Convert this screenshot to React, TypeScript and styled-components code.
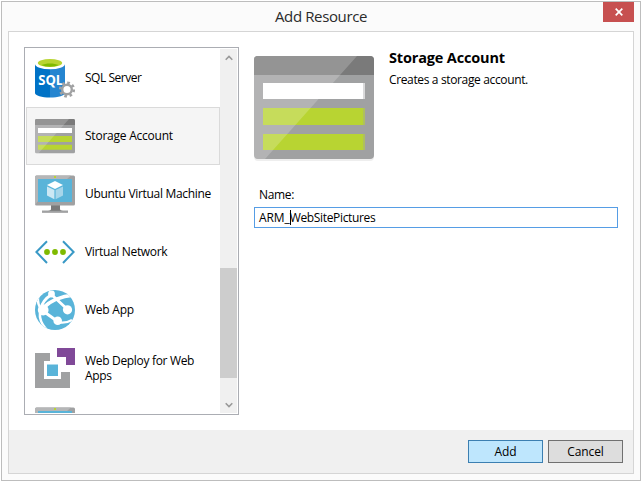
import React from 'react';
import styled, { createGlobalStyle } from 'styled-components';

const Global = createGlobalStyle`
  * { box-sizing: border-box; }
  body { margin: 0; background: #fff; color: #000; font: 12px/15px "Open Sans", "Noto Sans", sans-serif; }
`;

const Page = styled.div`
  width: 642px;
  height: 482px;
  padding: 1px;
`;
const Dialog = styled.main`
  width: 640px;
  height: 480px;
  display: flex;
  flex-direction: column;
  padding: 0 6px 6px;
  border: 1px solid #bdbdbd;
  background: #fbfbfb;
`;
const TitleBar = styled.header`
  height: 29px;
  flex: none;
  display: grid;
  grid-template-columns: 1fr 31px;
`;
const Title = styled.h1`
  margin: 0 0 0 31px;
  color: #2b2b2b;
  font-size: 15px;
  font-weight: 400;
  line-height: 29px;
  letter-spacing: -0.38px;
  text-align: center;
`;
const CloseButton = styled.button`
  display: grid;
  place-items: center;
  height: 20px;
  padding: 0;
  border: 0;
  background: #c75050;
`;
const Body = styled.div`
  flex: 1;
  min-height: 0;
  display: flex;
  flex-direction: column;
  border: 1px solid #d5d5d5;
  background: #fff;
`;
const Content = styled.div`
  height: 398px;
  display: flex;
  gap: 15px;
  padding: 15px 15px 15px;
`;
const ListBox = styled.div`
  width: 215px;
  height: 368px;
  flex: none;
  display: flex;
  padding: 1px;
  border: 1px solid #abadb3;
`;
const Items = styled.ul`
  width: 194px;
  height: 364px;
  margin: 0;
  padding: 0;
  overflow: hidden;
  list-style: none;
`;
const Item = styled.li<{ $selected?: boolean }>`
  height: 58px;
  display: flex;
  align-items: center;
  gap: 10px;
  padding-left: 8px;
  border: 1px solid ${p => (p.$selected ? '#dadada' : 'transparent')};
  background: ${p => (p.$selected ? '#f5f5f5' : 'transparent')};
  svg { flex: none; }
`;
const Label = styled.span<{ $track?: number }>`
  letter-spacing: ${p => p.$track ?? -0.1}px;
  white-space: pre;
`;
const ItemLabel = styled(Label)<{ $multiline?: boolean }>`
  padding-bottom: ${p => (p.$multiline ? 0 : 2)}px;
`;
const ScrollBar = styled.div`
  width: 17px;
  height: 364px;
  display: flex;
  flex-direction: column;
  background: #f0f0f0;
`;
const ScrollArrow = styled.div`
  height: 17px;
  display: grid;
  place-items: center;
`;
const Track = styled.div`
  flex: 1;
  padding-top: 202px;
`;
const Thumb = styled.div`
  height: 110px;
  background: #cdcdcd;
`;
const Details = styled.section`
  width: 364px;
  display: flex;
  flex-direction: column;
`;
const Summary = styled.div`
  display: flex;
  gap: 15px;
  height: 140px;
  padding-top: 9px;
`;
const Heading = styled.h2`
  margin: -8px 0 4px;
  font-size: 14.5px;
  font-weight: 700;
  line-height: 20px;
  letter-spacing: -0.16px;
`;
const FieldLabel = styled.label`
  display: block;
  height: 20px;
  padding-left: 5px;
`;
const Field = styled.div`
  display: flex;
  align-items: center;
  height: 21px;
  padding-left: 4px;
  border: 1px solid #569de5;
`;
const Caret = styled.i`
  width: 1px;
  height: 15px;
  margin: 0 -1px 0 0;
  background: #000;
`;
const Footer = styled.footer`
  flex: 1;
  display: flex;
  justify-content: flex-end;
  gap: 5px;
  padding: 10px 10px 0 0;
  background: #f0f0f0;
`;
const Button = styled.button<{ $primary?: boolean }>`
  width: 75px;
  height: 23px;
  padding: 0;
  border: 1px solid ${p => (p.$primary ? '#3c7fb1' : '#707070')};
  background: ${p => (p.$primary ? '#bee6fd' : '#dddddd')};
  color: #000;
  font: inherit;
`;

const SqlIcon = () => (
  <svg width="40" height="40" viewBox="0 0 40 40">
    <path d="M0 6v29c0 2.5 6.7 4.5 15 4.5V6z" fill="#0072c6" />
    <path d="M15 6v33.5c8.3 0 15-2 15-4.5V6z" fill="#2585d0" />
    <ellipse cx="15" cy="6" rx="15" ry="5.3" fill="#fff" />
    <ellipse cx="15" cy="5" rx="12.2" ry="4" fill="#b8d432" />
    <path d="M6.5 7.1c4-2.3 13-2.3 17 0-4.2 2.3-12.8 2.3-17 0z" fill="#7fba00" />
    <text x="3.2" y="26.8" fill="#fff" fontFamily="Open Sans, sans-serif" fontSize="14" fontWeight="700" textLength="25" lengthAdjust="spacingAndGlyphs">SQL</text>
    <circle cx="32" cy="31.5" r="6.8" fill="none" stroke="#a0a1a2" strokeWidth="2.6" strokeDasharray="2.67 2.67" />
    <circle cx="32" cy="31.5" r="4.8" fill="#fff" stroke="#a0a1a2" strokeWidth="2.4" />
  </svg>
);

const StorageIcon = () => (
  <svg width="40" height="40" viewBox="0 0 40 40">
    <rect y="3" width="40" height="34.3" rx="1.5" fill="#a0a1a2" />
    <path d="M0 9V4.5Q0 3 1.5 3h37Q40 3 40 4.5V9z" fill="#7a7a7a" />
    <path d="M3 12h34v5H3z" fill="#fff" />
    <path d="M3 20h34v6H3zM3 28.7h34v5H3z" fill="#b8d432" />
    <path d="M0 4.5Q0 3 1.5 3H34L3.5 37.3h-2Q0 37.3 0 35.8z" fill="#fff" opacity=".2" />
  </svg>
);

const LargeStorageIcon = () => (
  <svg width="120" height="105" viewBox="0 0 120 105">
    <rect y="1" width="120" height="104" rx="4" fill="#eee" />
    <rect width="120" height="103" rx="4" fill="#a0a1a2" />
    <path d="M0 19V4q0-4 4-4h112q4 0 4 4v15z" fill="#7a7a7a" />
    <path d="M9 27h102v16H9z" fill="#fff" />
    <path d="M9 52h102v17H9zM9 78h102v16H9z" fill="#b8d432" />
    <path d="M109 27h2v16h-2zM109 52h2v17h-2zM109 78h2v16h-2z" fill="#a0a1a2" opacity=".4" />
    <path d="M0 4q0-4 4-4h99L11 103H4q-4 0-4-4z" fill="#fff" opacity=".2" />
  </svg>
);

const MonitorIcon = () => (
  <svg width="40" height="40" viewBox="0 0 40 40">
    <path d="M16 31h9v4q0 1.7 3 1.7H33v1.8H7v-1.8h6q3 0 3-1.7z" fill="#7a7a7a" />
    <path d="M7 36.8h26v1.7H7z" fill="#a0a1a2" />
    <rect y="1.5" width="40" height="30" rx="1.5" fill="#a0a1a2" />
    <path d="M0 3q0-1.5 1.5-1.5H36L32 5H3v22L0 31z" fill="#b5b6b7" />
    <path d="M3 5h34v23H3z" fill="#59b4d9" />
    <path d="M19 2h2v2h-2z" fill="#b8d432" />
    <path d="m20 7 8 4-8 4-8-4z" fill="#fff" />
    <path d="m12 12.5 7.4 3.5v9.2L12 21.6z" fill="#cce8f4" />
    <path d="M28 12.5 20.6 16v9.2l7.4-3.6z" fill="#a7d6ea" />
  </svg>
);

const NetworkIcon = () => (
  <svg width="40" height="40" viewBox="0 0 40 40">
    <path d="M12 9.2 1.4 20 12 31M28 9.2 38.6 20 28 31" fill="none" stroke="#3999c6" strokeWidth="2" />
    <g fill="#7fba00"><circle cx="12" cy="20" r="2.9" /><circle cx="20" cy="20" r="2.9" /><circle cx="28" cy="20" r="2.9" /></g>
  </svg>
);

const WebIcon = () => (
  <svg width="40" height="40" viewBox="0 0 40 40">
    <defs><clipPath id="globe"><circle cx="20" cy="20" r="20" /></clipPath></defs>
    <g clipPath="url(#globe)">
      <path d="M0 0h40v40H0z" fill="#59b4d9" />
      <g fill="none" stroke="#fff">
        <path d="M17 5 32 19M16 5Q8 10 6 18" strokeWidth="2.8" />
        <path d="M8 18Q19 7 39 5" strokeWidth="3.6" />
        <path d="M8 21 22 31" strokeWidth="3" />
        <path d="M5 23Q4 31 11 39M3 6Q2 15 7 20" strokeWidth="2.6" />
        <path d="M22 32Q30 34 37 30" strokeWidth="2.4" />
      </g>
      <g fill="#fff"><circle cx="16.5" cy="4" r="3.4" /><circle cx="8.2" cy="20" r="5.4" /><circle cx="22.7" cy="30.7" r="4.3" /><circle cx="32.5" cy="19.8" r="4.6" /></g>
    </g>
  </svg>
);

const DeployIcon = () => (
  <svg width="40" height="40" viewBox="0 0 40 40">
    <path d="M0 5h15v8H9v18h17v-7h9v16H0z" fill="#a0a1a2" />
    <path d="M22 0h18v17h-9V9h-9z" fill="#804998" />
    <path d="M12 16.5h11V28H12z" fill="#59b4d9" />
  </svg>
);

const Chevron = ({ up = false }: { up?: boolean }) => (
  <svg width="8" height="6" viewBox="0 0 8 6">
    <path d={up ? 'M.7 4.7 4 1.4l3.3 3.3' : 'M.7 1.3 4 4.6l3.3-3.3'} fill="none" stroke="#999" strokeWidth="1.6" />
  </svg>
);

const resources = [
  { name: 'SQL Server', Icon: SqlIcon, track: -0.46 },
  { name: 'Storage Account', Icon: StorageIcon, selected: true, track: -0.23 },
  { name: 'Ubuntu Virtual Machine', Icon: MonitorIcon, track: -0.31 },
  { name: 'Virtual Network', Icon: NetworkIcon, track: -0.34 },
  { name: 'Web App', Icon: WebIcon, track: -0.24 },
  { name: 'Web Deploy for Web\nApps', Icon: DeployIcon, track: -0.32 },
  { name: '', Icon: MonitorIcon },
];

export default function App() {
  return (
    <Page>
      <Global />
      <Dialog>
        <TitleBar>
          <Title>Add Resource</Title>
          <CloseButton aria-label="Close">
            <svg width="8" height="8" viewBox="0 0 8 8"><path d="m.7.7 6.6 6.6M7.3.7.7 7.3" stroke="#fff" strokeWidth="1.7" /></svg>
          </CloseButton>
        </TitleBar>
        <Body>
          <Content>
            <ListBox>
              <Items>
                {resources.map(({ name, Icon, selected, track }, i) => (
                  <Item key={i} $selected={selected}>
                    <Icon />
                    <ItemLabel $track={track} $multiline={name.includes('\n')}>{name}</ItemLabel>
                  </Item>
                ))}
              </Items>
              <ScrollBar>
                <ScrollArrow><Chevron up /></ScrollArrow>
                <Track><Thumb /></Track>
                <ScrollArrow><Chevron /></ScrollArrow>
              </ScrollBar>
            </ListBox>
            <Details>
              <Summary>
                <LargeStorageIcon />
                <div>
                  <Heading>Storage Account</Heading>
                  <Label $track={-0.36}>Creates a storage account.</Label>
                </div>
              </Summary>
              <FieldLabel><Label $track={-0.35}>Name:</Label></FieldLabel>
              <Field><Label>ARM_</Label><Caret /><Label $track={-0.34}>WebSitePictures</Label></Field>
            </Details>
          </Content>
          <Footer>
            <Button $primary><Label>Add</Label></Button>
            <Button><Label>Cancel</Label></Button>
          </Footer>
        </Body>
      </Dialog>
    </Page>
  );
}
